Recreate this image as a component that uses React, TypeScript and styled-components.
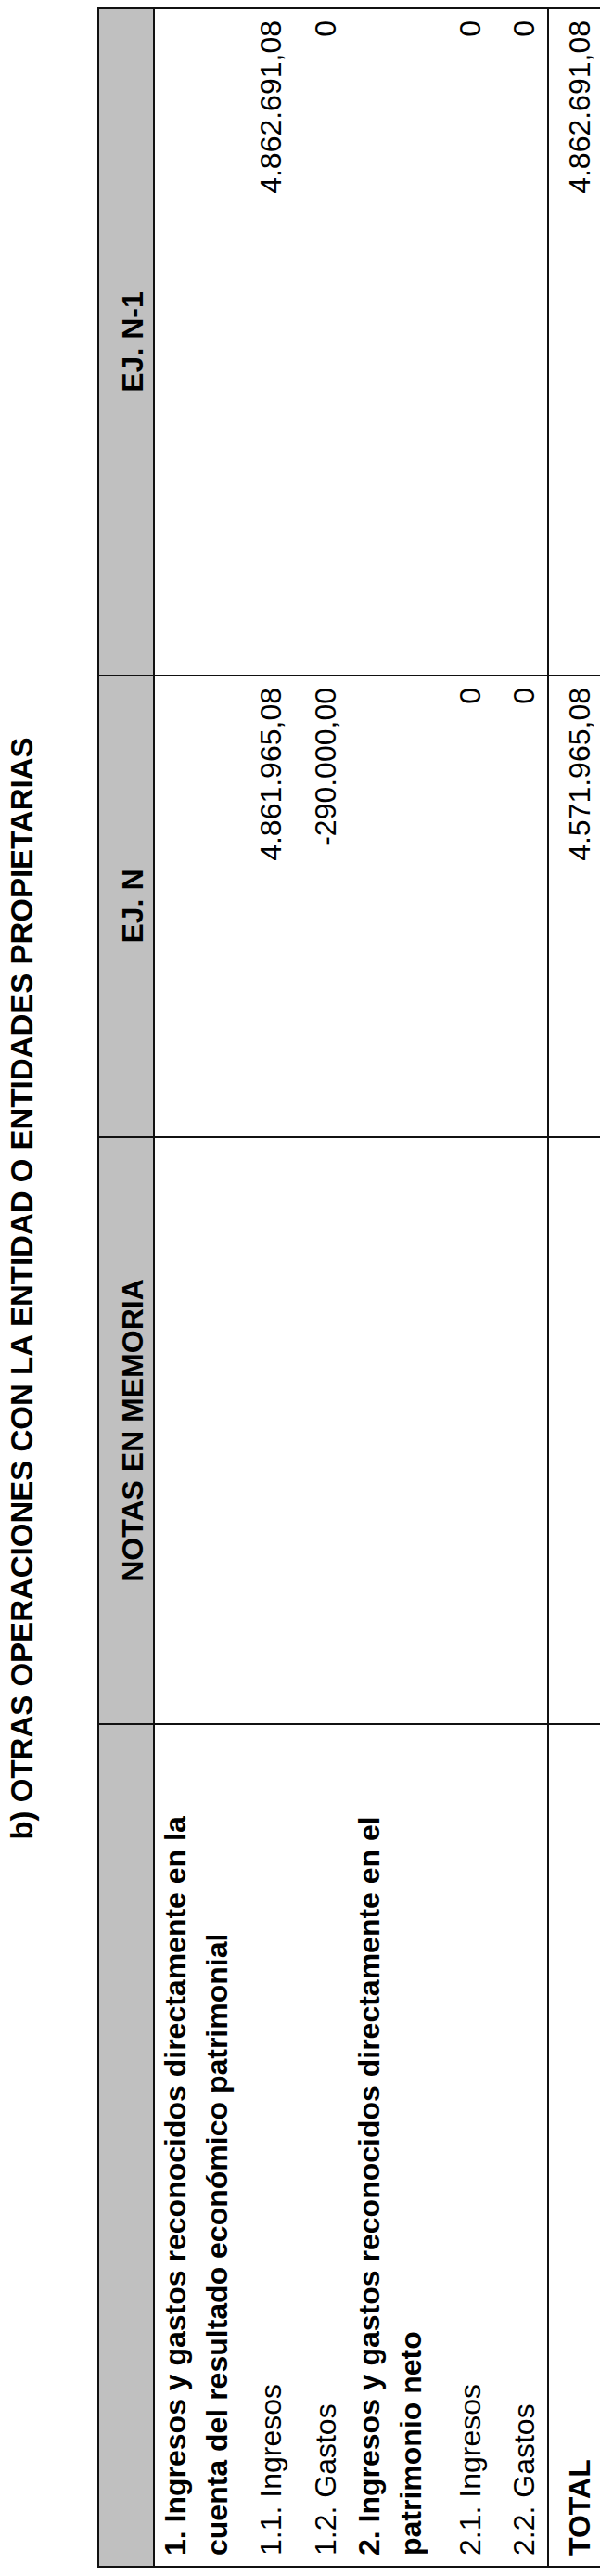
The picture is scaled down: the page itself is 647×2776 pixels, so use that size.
import styled, { createGlobalStyle } from "styled-components";

const GlobalStyle = createGlobalStyle`
  html, body {
    margin: 0;
    padding: 0;
    background: #ffffff;
  }
`;

// the printed sheet is landscape, so it is laid out flat and turned a quarter left
const Page = styled.div`
  width: 647px;
  height: 2776px;
  overflow: hidden;
`;

const Sheet = styled.div`
  width: 2776px;
  height: 647px;
  transform-origin: top left;
  transform: rotate(-90deg) translateX(-100%);
  font-family: "Liberation Sans", Arial, sans-serif;
  color: #000;
  box-sizing: border-box;
  padding-left: 9px;
`;

const Title = styled.h2`
  margin: 0;
  width: 2757px;
  height: 105px;
  box-sizing: border-box;
  padding-top: 7px;
  font-size: 33px;
  line-height: 33px;
  font-weight: bold;
  text-align: center;
`;

const Table = styled.table`
  width: 2757px;
  table-layout: fixed;
  border-collapse: collapse;
  border: 2px solid #111;
  font-size: 32px;
`;

const Row = styled.tr<{ $h: number }>`
  height: ${({ $h }) => $h}px;
`;

const HeadCell = styled.th`
  background: #c0c0c0;
  border: 2px solid #111;
  font-weight: bold;
  text-align: center;
  vertical-align: bottom;
  line-height: 36px;
  padding: 0 0 4px;
  white-space: nowrap;
`;

const Cell = styled.td<{ $bold?: boolean; $num?: boolean; $top?: boolean }>`
  border-left: 2px solid #111;
  border-right: 2px solid #111;
  border-top: ${({ $top }) => ($top ? "2px solid #111" : "none")};
  font-weight: ${({ $bold }) => ($bold ? "bold" : "normal")};
  text-align: ${({ $num }) => ($num ? "right" : "left")};
  vertical-align: bottom;
  line-height: 45px;
  padding: 0 ${({ $num }) => ($num ? "12px" : "0")} 2px ${({ $num }) => ($num ? "0" : "11px")};
  white-space: nowrap;
  overflow: hidden;
`;

type Line = {
  label: string[];
  bold?: boolean;
  h: number;
  n?: string;
  n1?: string;
};

const lines: Line[] = [
  {
    label: ["1. Ingresos y gastos reconocidos directamente en la", "cuenta del resultado económico patrimonial"],
    bold: true,
    h: 90,
  },
  { label: ["1.1. Ingresos"], h: 58, n: "4.861.965,08", n1: "4.862.691,08" },
  { label: ["1.2. Gastos"], h: 59, n: "-290.000,00", n1: "0" },
  {
    label: ["2. Ingresos y gastos reconocidos directamente en el", "patrimonio neto"],
    bold: true,
    h: 90,
  },
  { label: ["2.1. Ingresos"], h: 64, n: "0", n1: "0" },
  { label: ["2.2. Gastos"], h: 59, n: "0", n1: "0" },
];

export default function App() {
  return (
    <>
      <GlobalStyle />
      <Page>
        <Sheet>
          <Title>b) OTRAS OPERACIONES CON LA ENTIDAD O ENTIDADES PROPIETARIAS</Title>
          <Table>
            <colgroup>
              <col style={{ width: 908 }} />
              <col style={{ width: 633 }} />
              <col style={{ width: 497 }} />
              <col style={{ width: 719 }} />
            </colgroup>
            <thead>
              <Row $h={60}>
                <HeadCell />
                <HeadCell>NOTAS EN MEMORIA</HeadCell>
                <HeadCell>EJ. N</HeadCell>
                <HeadCell>EJ. N-1</HeadCell>
              </Row>
            </thead>
            <tbody>
              {lines.map((l) => (
                <Row $h={l.h} key={l.label[0]}>
                  <Cell $bold={l.bold}>
                    {l.label.map((t, i) => (
                      <span key={t}>
                        {i > 0 && <br />}
                        {t}
                      </span>
                    ))}
                  </Cell>
                  <Cell />
                  <Cell $num>{l.n}</Cell>
                  <Cell $num>{l.n1}</Cell>
                </Row>
              ))}
              <Row $h={60}>
                <Cell $bold $top>TOTAL</Cell>
                <Cell $top />
                <Cell $num $top>4.571.965,08</Cell>
                <Cell $num $top>4.862.691,08</Cell>
              </Row>
            </tbody>
          </Table>
        </Sheet>
      </Page>
    </>
  );
}
